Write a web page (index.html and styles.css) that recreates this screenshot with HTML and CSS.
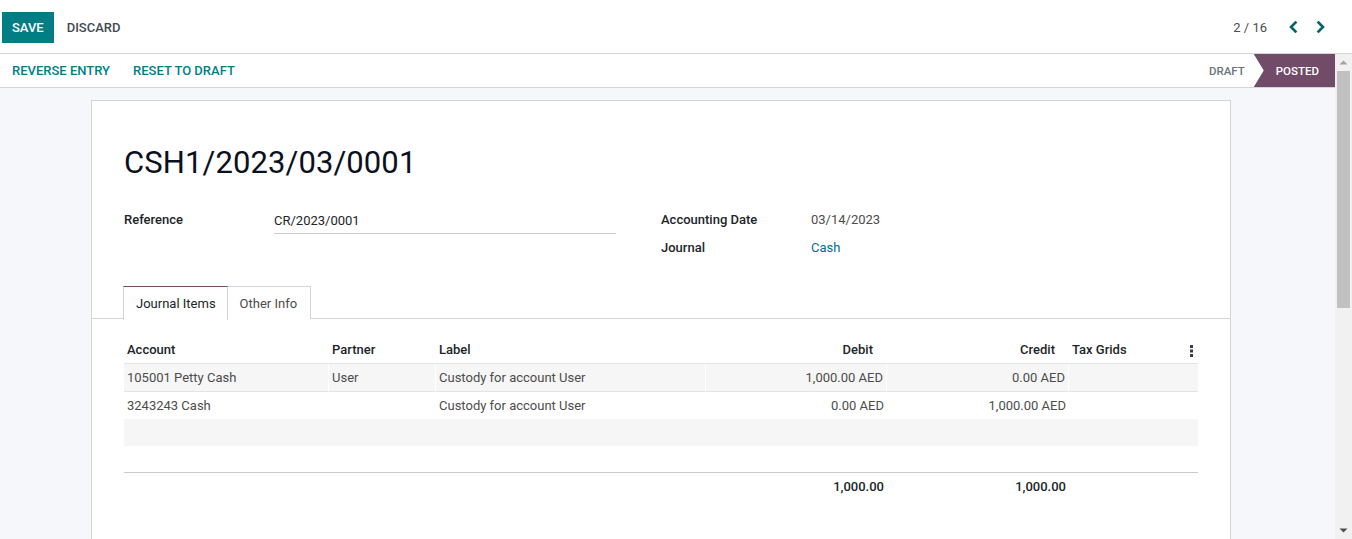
FILE: index.html
```html
<!DOCTYPE html>
<html lang="en">
<head>
<meta charset="utf-8">
<title>CSH1/2023/03/0001</title>
<link rel="stylesheet" href="styles.css">
</head>
<body>
<div class="app">
  <header class="control-panel">
    <div class="cp-buttons">
      <button class="btn btn-primary">Save</button>
      <button class="btn btn-secondary">Discard</button>
    </div>
    <div class="pager">
      <span class="pager-value">2 / 16</span>
      <button class="pager-btn" aria-label="Previous">
        <svg width="10" height="12" viewBox="0 0 10 12"><polyline points="7.5,1.5 3,6 7.5,10.5" fill="none" stroke="#01666b" stroke-width="2.6" stroke-linejoin="miter" stroke-linecap="square"/></svg>
      </button>
      <button class="pager-btn" aria-label="Next">
        <svg width="10" height="12" viewBox="0 0 10 12"><polyline points="2.5,1.5 7,6 2.5,10.5" fill="none" stroke="#01666b" stroke-width="2.6" stroke-linejoin="miter" stroke-linecap="square"/></svg>
      </button>
    </div>
  </header>
  <div class="main">
    <main class="scroll">
      <div class="statusbar">
        <div class="sb-buttons">
          <button class="btn btn-link">Reverse Entry</button>
          <button class="btn btn-link">Reset to Draft</button>
        </div>
        <div class="sb-states">
          <span class="state">Draft</span>
          <span class="state state-active">Posted</span>
        </div>
      </div>
      <div class="sheet-wrap">
        <div class="sheet">
          <h1 class="title">CSH1/2023/03/0001</h1>
          <div class="groups">
            <div class="group">
              <div class="field-row">
                <label class="form-label">Reference</label>
                <div class="field-input">CR/2023/0001</div>
              </div>
            </div>
            <div class="group">
              <div class="field-row">
                <label class="form-label">Accounting Date</label>
                <div class="field-value">03/14/2023</div>
              </div>
              <div class="field-row">
                <label class="form-label">Journal</label>
                <div class="field-value link">Cash</div>
              </div>
            </div>
          </div>
          <div class="tabs">
            <span class="tab tab-active">Journal Items</span>
            <span class="tab">Other Info</span>
          </div>
          <table class="list">
            <colgroup>
              <col class="c-account"><col class="c-partner"><col class="c-label"><col class="c-debit"><col class="c-credit"><col class="c-tax"><col class="c-opt">
            </colgroup>
            <thead>
              <tr>
                <th>Account</th>
                <th>Partner</th>
                <th>Label</th>
                <th class="num num-head">Debit</th>
                <th class="num num-head">Credit</th>
                <th>Tax Grids</th>
                <th class="opt">
                  <svg width="3" height="12" viewBox="0 0 3 12"><rect x="0" y="0" width="3" height="3" fill="#3b3b45"/><rect x="0" y="4.5" width="3" height="3" fill="#3b3b45"/><rect x="0" y="9" width="3" height="3" fill="#3b3b45"/></svg>
                </th>
              </tr>
            </thead>
            <tbody>
              <tr class="row odd">
                <td>105001 Petty Cash</td>
                <td>User</td>
                <td>Custody for account User</td>
                <td class="num">1,000.00 AED</td>
                <td class="num">0.00 AED</td>
                <td class="last"></td>
                <td></td>
              </tr>
              <tr class="row r2">
                <td>3243243 Cash</td>
                <td></td>
                <td>Custody for account User</td>
                <td class="num">0.00 AED</td>
                <td class="num">1,000.00 AED</td>
                <td></td>
                <td></td>
              </tr>
              <tr class="row odd empty"><td colspan="7"></td></tr>
              <tr class="row empty r4"><td colspan="7"></td></tr>
            </tbody>
            <tfoot>
              <tr>
                <td></td>
                <td></td>
                <td></td>
                <td class="num">1,000.00</td>
                <td class="num">1,000.00</td>
                <td></td>
                <td></td>
              </tr>
            </tfoot>
          </table>
        </div>
      </div>
    </main>
    <div class="scrollbar" aria-hidden="true">
      <div class="sb-arrow">
        <svg width="17" height="17" viewBox="0 0 17 17"><polygon points="4.5,10.5 8.5,6.5 12.5,10.5" fill="#a3a3a3"/></svg>
      </div>
      <div class="sb-thumb"></div>
      <div class="sb-track"></div>
      <div class="sb-arrow">
        <svg width="17" height="17" viewBox="0 0 17 17"><polygon points="4.5,6.5 8.5,10.5 12.5,6.5" fill="#505050"/></svg>
      </div>
    </div>
  </div>
</div>
</body>
</html>
```
FILE: styles.css
```css
* { box-sizing: border-box; }
html, body { margin: 0; height: 100%; }
body {
  font-family: Roboto, "Noto Sans", sans-serif;
  font-size: 13px;
  color: #4c4c4c;
  background: #fff;
  overflow: hidden;
}
button { font-family: inherit; }
.app { display: flex; flex-direction: column; height: 100vh; }

.control-panel {
  flex: none;
  height: 54px;
  border-bottom: 1px solid #d3d5d9;
  display: flex;
  align-items: center;
  justify-content: space-between;
  background: #fff;
}
.cp-buttons { display: flex; align-items: center; margin-left: 2px; margin-top: 1px; }
.btn {
  border: 0;
  background: none;
  font-size: 13px;
  font-weight: 500;
  text-transform: uppercase;
  cursor: pointer;
  padding: 0 12px;
  height: 31px;
  line-height: 31px;
}
.btn-primary { background: #017e84; color: #fff; padding: 0 10px; }
.btn-secondary { color: #3f4a52; margin-left: 1px; }
.pager { display: flex; align-items: center; margin-right: 26px; margin-top: 1px; }
.pager-value { color: #4c4c4c; font-size: 13px; margin-right: 21px; }
.pager-btn { border: 0; background: none; padding: 0; width: 10px; height: 12px; display: flex; margin-left: 18px; }
.pager-btn:first-of-type { margin-left: 0; }

.main { flex: 1; min-height: 0; display: flex; }
.scroll {
  flex: 1;
  min-width: 0;
  overflow: hidden;
  background: #f6f7fa;
}
.scrollbar {
  flex: none;
  width: 17px;
  background: #f1f1f1;
  display: flex;
  flex-direction: column;
}
.sb-arrow { height: 17px; flex: none; display: flex; }
.sb-thumb { height: 237px; margin: 0 2px; background: #c1c1c1; flex: none; }
.sb-track { flex: 1; }

.statusbar {
  height: 34px;
  background: #fff;
  border-bottom: 1px solid #d3d5d9;
  display: flex;
  align-items: stretch;
  justify-content: space-between;
}
.sb-buttons { display: flex; align-items: center; }
.btn-link { color: #017e84; padding: 0 11px; margin-left: 1px; height: 33px; line-height: 33px; }
.sb-states { display: flex; align-items: stretch; }
.state {
  display: flex;
  align-items: center;
  font-size: 11.5px;
  font-weight: 500;
  text-transform: uppercase;
  color: #6c757d;
  padding: 0 9px 0 0;
}
.state-active {
  background: #714b67;
  color: #fff;
  padding: 0 16px 0 22px;
  clip-path: polygon(0 0, 100% 0, 100% 100%, 0 100%, 10px 50%);
}

.sheet-wrap { padding: 12px 0 17px 91px; }
.sheet {
  width: 1140px;
  min-height: 860px;
  background: #fff;
  border: 1px solid #d3d5d9;
  padding: 44px 32px 0 32px;
}
.title {
  margin: 0;
  font-size: 31px;
  line-height: 36px;
  font-weight: 400;
  letter-spacing: 0.1px;
  color: #0b1020;
}
.groups {
  display: grid;
  grid-template-columns: 537px 537px;
  margin-top: 24px;
}
.group { display: flex; flex-direction: column; }
.field-row {
  display: grid;
  grid-template-columns: 150px 342px;
  align-items: center;
  height: 28px;
}
.form-label { font-weight: 500; color: #212529; }
.field-input {
  color: #212529;
  border-bottom: 1px solid #c8cacd;
  height: 25px;
  line-height: 24px;
  margin-top: 4px;
}
.field-value { color: #4c4c4c; }
.field-value.link { color: #016e8a; }

.tabs {
  display: flex;
  margin: 25px -32px 0 -32px;
  padding-left: 31px;
  border-bottom: 1px solid #d3d5d9;
  height: 33px;
}
.tab {
  display: flex;
  align-items: center;
  padding: 0 12px;
  height: 33px;
  border: 1px solid #d3d5d9;
  border-bottom: 0;
  color: #4c4c4c;
  background: #fff;
}
.tab-active {
  border-top: 1px solid #714b67;
  color: #212529;
  height: 34px;
  position: relative;
  z-index: 1;
  padding-right: 11px;
}
.tab-active + .tab { border-left: 0; padding-right: 13px; }

.list {
  width: 1074px;
  margin-top: 17px;
  border-collapse: separate;
  border-spacing: 0;
  table-layout: fixed;
}
.c-account { width: 205px; }
.c-partner { width: 107px; }
.c-label { width: 270px; }
.c-debit { width: 181px; }
.c-credit { width: 182px; }
.c-tax { width: 109px; }
.c-opt { width: 20px; }
.list th {
  text-align: left;
  font-weight: 500;
  color: #212529;
  height: 28px;
  padding: 0 3px;
  border-bottom: 1px solid #e4e4e6;
  white-space: nowrap;
}
.list td {
  height: 27px;
  padding: 0 3px;
  color: #4c4c4c;
  white-space: nowrap;
}
.list .num { text-align: right; }
.list th.num-head { padding-right: 14px; }
.list th.opt { padding: 0; }
.list th.opt svg { display: block; margin: 2px 0 0 12px; }
.row.odd td { background: #f6f6f6; }
.row.odd:first-child td { border-right: 1px solid #fff; height: 28px; border-bottom: 1px solid #e4e4e6; }
.row.odd:first-child td.last,
.row.odd:first-child td:last-child { border-right: 0; }
.row.r4 td { height: 26px; }
.list tfoot td {
  border-top: 1px solid #c8cacd;
  font-weight: 500;
  color: #212529;
  height: 30px;
  padding-bottom: 2px;
}
```
